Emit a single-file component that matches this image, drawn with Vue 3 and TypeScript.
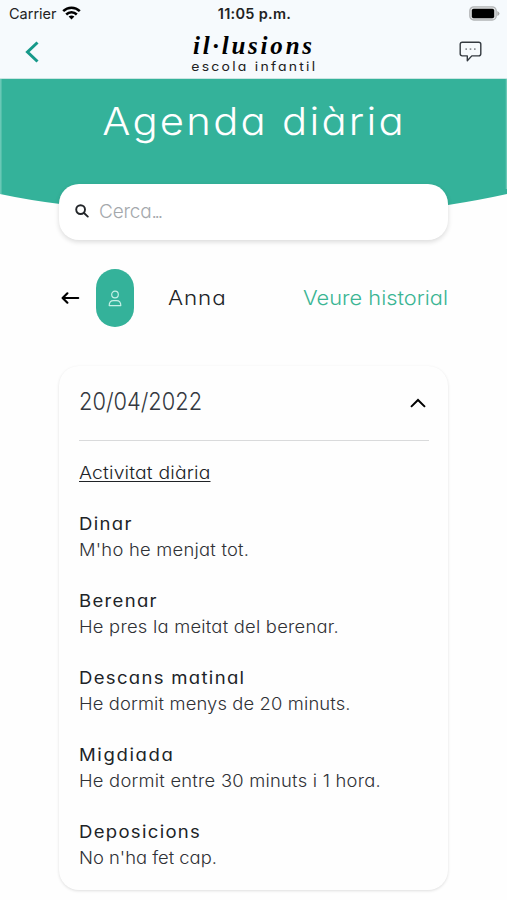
<script setup lang="ts">
interface Entry {
  id: string
  title: string
  text: string
}

const entries: Entry[] = [
  { id: 'dinar', title: 'Dinar', text: "M'ho he menjat tot." },
  { id: 'berenar', title: 'Berenar', text: 'He pres la meitat del berenar.' },
  { id: 'descans', title: 'Descans matinal', text: 'He dormit menys de 20 minuts.' },
  { id: 'migdiada', title: 'Migdiada', text: 'He dormit entre 30 minuts i 1 hora.' },
  { id: 'deposicions', title: 'Deposicions', text: "No n'ha fet cap." },
]
</script>

<template>
  <main class="screen">
    <header class="top">
      <div class="status">
        <div class="carrier">
          <span>Carrier</span>
          <svg width="19" height="14" viewBox="0 0 19 14" fill="none" stroke="#000" stroke-width="2.5">
            <path d="M1.2 5.2C5.8.6 13.200.6 17.800 5.200" />
            <path d="M4.200 8.500C7.200 5.500 11.800 5.500 14.800 8.500" />
            <path d="M6.600 10.600Q9.500 8.200 12.400 10.600L9.500 13.600Z" fill="#000" stroke="none" />
          </svg>
        </div>
        <span class="time">11:05 p.m.</span>
        <svg class="battery" width="31" height="15" viewBox="0 0 31 15">
          <rect x=".8" y=".8" width="26.400" height="13.200" rx="4" fill="#e0e2e3" stroke="#b3b5b7" stroke-width="1.300" />
          <rect x="2.800" y="2.800" width="22.400" height="9.400" rx="1.800" fill="#000" />
          <path d="M28.300 5q2.200 1 2.200 2.500t-2.200 2.500z" fill="#aaa" />
        </svg>
      </div>
      <nav class="nav">
        <svg width="16" height="24" viewBox="0 0 16 24" fill="none" stroke="#16998a" stroke-width="3">
          <path d="M13.500 2.500L3.500 12l10 9.500" />
        </svg>
        <div class="brand">
          <span class="logo">il·lusions</span>
          <span class="tagline">escola infantil</span>
        </div>
        <svg width="23" height="22" viewBox="0 0 23 22" fill="none" stroke="#343a40" stroke-width="1.400" stroke-linejoin="round">
          <path d="M3.300 1.200h16.400q2.100 0 2.100 2.100v9.500q0 2.100-2.100 2.100h-6.900L8.300 19.800v-4.900h-5q-2.100 0-2.100-2.100V3.300q0-2.100 2.100-2.100z" />
          <path d="M6.400 8.100h1.600M10.700 8.100h1.600M15 8.100h1.600" stroke="#8b9095" stroke-width="1.600" />
        </svg>
      </nav>
    </header>

    <section class="hero">
      <svg class="curve" width="507" height="143" viewBox="0 0 507 143">
        <path d="M0 0H507V115Q480 121 448 126Q253.500 150 60 125Q28 121 0 115Z" fill="#34b29a" />
        <path d="M.8 0V115M506.500 0V110" stroke="#6cc9b7" stroke-width="1.500" />
      </svg>
      <h1>Agenda diària</h1>
      <div class="search">
        <svg width="14" height="14" viewBox="0 0 14 14" fill="none" stroke="#222529" stroke-width="1.900" stroke-linecap="round">
          <circle cx="5.600" cy="5.600" r="4.400" />
          <path d="M9 9l3.800 3.600" />
        </svg>
        <span>Cerca<span class="dots">...</span></span>
      </div>
    </section>

    <section class="child">
      <svg class="back" width="20" height="14" viewBox="0 0 20 14" fill="none" stroke="#000" stroke-width="2.200" stroke-linecap="round" stroke-linejoin="round">
        <path d="M18.200 7H2.800M7.400 2.300L2.600 7l4.800 4.700" />
      </svg>
      <div class="avatar">
        <svg width="14" height="17" viewBox="0 0 14 17" fill="none" stroke="#c5f0e6" stroke-width="1.200" stroke-linejoin="round">
          <circle cx="7" cy="4.500" r="3.300" />
          <path d="M1.200 15.600q0-5 4.200-5h3.200q4.200 0 4.200 5z" />
        </svg>
      </div>
      <span class="name">Anna</span>
      <span class="history">Veure historial</span>
    </section>

    <article class="card">
      <div class="card-head">
        <span class="date">20/04/2022</span>
        <svg width="18" height="12" viewBox="0 0 18 12" fill="none" stroke="#000" stroke-width="2">
          <path d="M2 9.900l7-6.900 7 6.900" />
        </svg>
      </div>
      <h2>Activitat diària</h2>
      <div v-for="entry in entries" :key="entry.id" class="entry" :class="entry.id">
        <h3>{{ entry.title }}</h3>
        <p>{{ entry.text }}</p>
      </div>
    </article>
  </main>
</template>

<style>
body {
  margin: 0;
  background: #fefefe;
}
</style>

<style scoped>
.screen {
  width: 507px;
  height: 900px;
  overflow: hidden;
  background: #fefefe;
  font-family: Inter, "Open Sans", sans-serif;
  font-feature-settings: "cv11", "ss03";
  color: #202327;
  white-space: nowrap;
}
svg { display: block; flex: none; }
h1, h2, h3, p { margin: 0; font-weight: 300; }
.top {
  box-sizing: border-box;
  height: 79px;
  background: #f6fafd;
  border-bottom: 1px solid #c9e5e2;
}
.status {
  display: grid;
  grid-template-columns: 1fr auto 1fr;
  align-items: center;
  height: 27px;
  padding: 0 7px 0 9px;
  font-size: 14.500px;
  font-feature-settings: normal;
  color: #222;
}
.carrier { display: flex; align-items: center; gap: 5px; }
.carrier svg { margin-top: -1px; }
.time { font-weight: 600; font-size: 14.500px; letter-spacing: .3px; }
.battery { justify-self: end; }
.nav {
  display: flex;
  justify-content: space-between;
  align-items: center;
  height: 49px;
  padding: 0 25px 0 24px;
}
.brand { display: flex; flex-direction: column; align-items: center; margin: 2px 0 0 9px; color: #000; }
.logo {
  font: italic bold 25px/27px "Liberation Serif", serif;
  letter-spacing: 2.800px;
}
.tagline { font-size: 12.500px; line-height: 15px; letter-spacing: 2px; color: #222; transform: scaleX(1.12); }
.hero {
  position: relative;
  display: flex;
  flex-direction: column;
  align-items: center;
  height: 161px;
}
.curve { position: absolute; left: 0; top: 0; }
h1 {
  position: relative;
  height: 105px;
  margin-left: 2px;
  color: #fff;
  font-size: 38px;
  line-height: 84px;
  letter-spacing: 2.050px;
  transform: scaleX(1.1);
}
.search {
  position: relative;
  box-sizing: border-box;
  display: flex;
  align-items: center;
  gap: 10px;
  width: 389px;
  height: 56px;
  padding: 0 15px 2px 16px;
  border-radius: 20px;
  background: #fff;
  box-shadow: 0 2px 5px rgba(0, 0, 0, .14);
  color: #a4a8ac;
  font-size: 19px;
  font-weight: 300;
  letter-spacing: -.2px;
}
.dots { letter-spacing: -2.200px; }
.child {
  display: flex;
  align-items: center;
  height: 58px;
  margin: 29px 59px 0 60px;
  font-size: 20px;
  font-weight: 300;
}
.avatar {
  display: flex;
  align-items: center;
  justify-content: center;
  width: 38px;
  height: 58px;
  margin: 0 34px 0 16px;
  border-radius: 19px;
  background: #34b29a;
}
.name { letter-spacing: .800px; transform: scaleX(1.12); transform-origin: left; }
.history { margin-left: auto; color: #3bb594; transform: scaleX(1.09); transform-origin: right; }
.card {
  box-sizing: border-box;
  width: 389px;
  height: 524px;
  margin: 39px 0 0 59px;
  padding: 0 20px;
  border-radius: 20px;
  background: #fefefe;
  box-shadow: 0 1px 3px rgba(0, 0, 0, .13);
}
.card-head {
  display: flex;
  justify-content: space-between;
  align-items: center;
  height: 74px;
  margin-right: -1px;
  padding-right: 2px;
  border-bottom: 1.500px solid #d9dadb;
}
.date {
  margin-top: -4px;
  font-size: 23.500px;
  font-weight: 300;
  color: #343840;
  transform: scaleX(.93);
  transform-origin: left;
}
h2 {
  width: max-content;
  margin-top: 19px;
  font-size: 17.500px;
  line-height: 26px;
  letter-spacing: .150px;
  text-decoration: underline;
  text-decoration-thickness: 1px;
  text-underline-offset: 2px;
  transform: scaleX(1.105);
  transform-origin: left;
}
.entry { height: 52px; margin-top: 25px; }
h3, p { width: max-content; font-size: 17px; line-height: 26px; transform-origin: left; }
h3 { font-weight: 400; letter-spacing: 1.200px; transform: scaleX(1.09); }
p { color: #303236; letter-spacing: .220px; transform: scaleX(1.08); }
.migdiada h3 { letter-spacing: 1.500px; }
.descans p { letter-spacing: .130px; }
.deposicions p { letter-spacing: 0; }
</style>
